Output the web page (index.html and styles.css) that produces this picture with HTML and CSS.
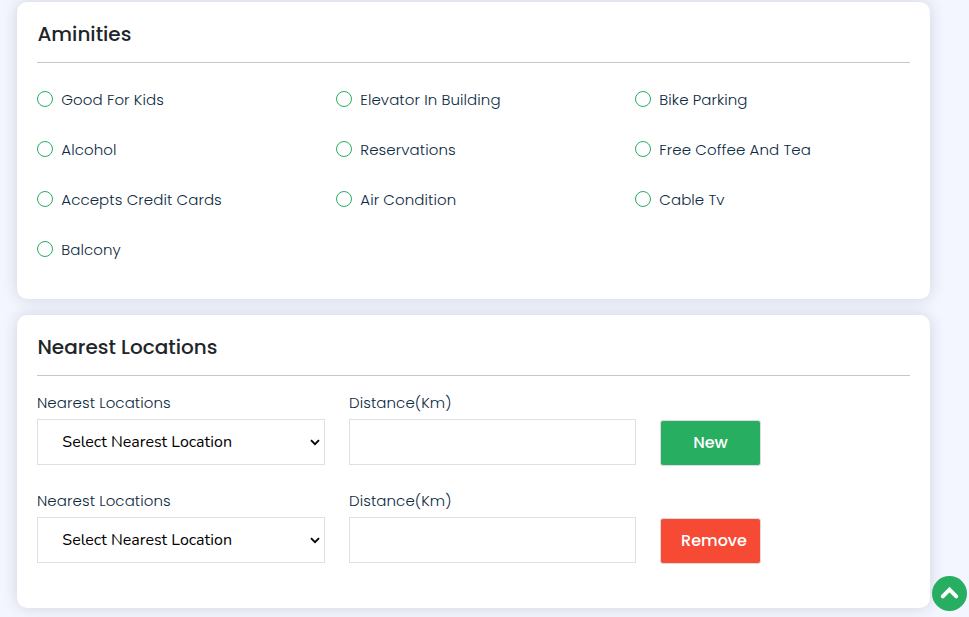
FILE: index.html
```html
<!DOCTYPE html>
<html lang="en">
<head>
<meta charset="utf-8">
<title>Property details</title>
<link rel="stylesheet" href="styles.css">
</head>
<body>
<main class="page">
  <section class="card amenities">
    <h2 class="card-title">Aminities</h2>
    <ul class="options">
      <li class="option"><i class="ring"></i><span>Good For Kids</span></li>
      <li class="option"><i class="ring"></i><span>Elevator In Building</span></li>
      <li class="option"><i class="ring"></i><span>Bike Parking</span></li>
      <li class="option"><i class="ring"></i><span>Alcohol</span></li>
      <li class="option"><i class="ring"></i><span>Reservations</span></li>
      <li class="option"><i class="ring"></i><span>Free Coffee And Tea</span></li>
      <li class="option"><i class="ring"></i><span>Accepts Credit Cards</span></li>
      <li class="option"><i class="ring"></i><span>Air Condition</span></li>
      <li class="option"><i class="ring"></i><span>Cable Tv</span></li>
      <li class="option"><i class="ring"></i><span>Balcony</span></li>
    </ul>
  </section>
  <section class="card locations">
    <h2 class="card-title">Nearest Locations</h2>
    <div class="row">
      <div class="field"><div class="label">Nearest Locations</div>
        <div class="control select"><span>Select Nearest Location</span><svg class="chevron" viewBox="0 0 10 7"><path d="M1 1.2 5 5.2 9 1.2"/></svg></div></div>
      <div class="field"><div class="label">Distance(Km)</div><input class="control" type="text" aria-label="Distance"></div>
      <button class="btn btn-new" type="button">New</button>
    </div>
    <div class="row">
      <div class="field"><div class="label">Nearest Locations</div>
        <div class="control select"><span>Select Nearest Location</span><svg class="chevron" viewBox="0 0 10 7"><path d="M1 1.2 5 5.2 9 1.2"/></svg></div></div>
      <div class="field"><div class="label">Distance(Km)</div><input class="control" type="text" aria-label="Distance"></div>
      <button class="btn btn-remove" type="button">Remove</button>
    </div>
  </section>
</main>
<a class="to-top" href="#"><svg viewBox="0 0 35 35"><path d="M10.8 20.3 17.5 13.6 24.2 20.3"/></svg></a>
</body>
</html>
```

FILE: styles.css
```css
* { box-sizing: border-box; }
body {
  margin: 0;
  height: 617px;
  overflow: hidden;
  background: #f3f6ff;
  color: #0d2a42;
  font: 300 15px/24px Poppins, Inter, "Liberation Sans", sans-serif;
}
.page { width: 913px; margin-left: 17px; padding-top: 2px; display: flex; flex-direction: column; gap: 16px; }
.card { background: #fff; border-radius: 10px; padding: 20px; box-shadow: 0 0 15px rgba(33, 37, 41, .16); }
.amenities { height: 297px; }
.locations { height: 293px; }
.card-title {
  margin: 0;
  height: 41px;
  border-bottom: 1px solid #c7c7c9;
  padding-left: .4px;
  color: #212529;
  font-size: 20px;
  font-weight: 500;
  line-height: 24px;
}
.options {
  list-style: none;
  margin: 24px -24px 0 0;
  padding: 0;
  display: grid;
  grid-template-columns: repeat(3, 1fr);
  grid-auto-rows: 26px;
  row-gap: 24px;
  letter-spacing: .08px;
}
.option { display: flex; align-items: center; gap: 8.3px; white-space: nowrap; }
.ring { width: 16px; height: 16px; margin-bottom: 2px; border: 1px solid #27ae60; border-radius: 50%; }
.row { display: grid; grid-template-columns: 288px 287px 101px; column-gap: 24px; margin-top: 15px; align-items: end; }
.row + .row { margin-top: 24px; }
.label { height: 28px; white-space: nowrap; letter-spacing: .08px; }
.control { display: block; width: 100%; height: 46px; border: 1px solid #e1dfe0; border-radius: 0; background: #fff; }
.select {
  display: flex;
  align-items: center;
  justify-content: space-between;
  padding: 0 4px 0 24.3px;
  color: #000;
  font: 400 16px/24px Nunito, "Open Sans", sans-serif;
}
.chevron { width: 10px; height: 7px; margin-top: 1px; fill: none; stroke: #000; stroke-width: 1.8; }
.btn {
  height: 46px;
  margin-bottom: -1px;
  padding: 0;
  border: 1px solid #ddd;
  border-radius: 3px;
  color: #fff;
  font: 500 16px/24px Poppins, Inter, sans-serif;
}
.btn-new { background: #27ae60; }
.btn-remove { padding-left: 7px; background: #f64a35; }
.to-top { position: fixed; right: 2px; bottom: 6px; width: 35px; height: 35px; border-radius: 50%; background: #27ae60; }
.to-top svg { display: block; fill: none; stroke: #fff; stroke-width: 4; stroke-linecap: round; }
```
